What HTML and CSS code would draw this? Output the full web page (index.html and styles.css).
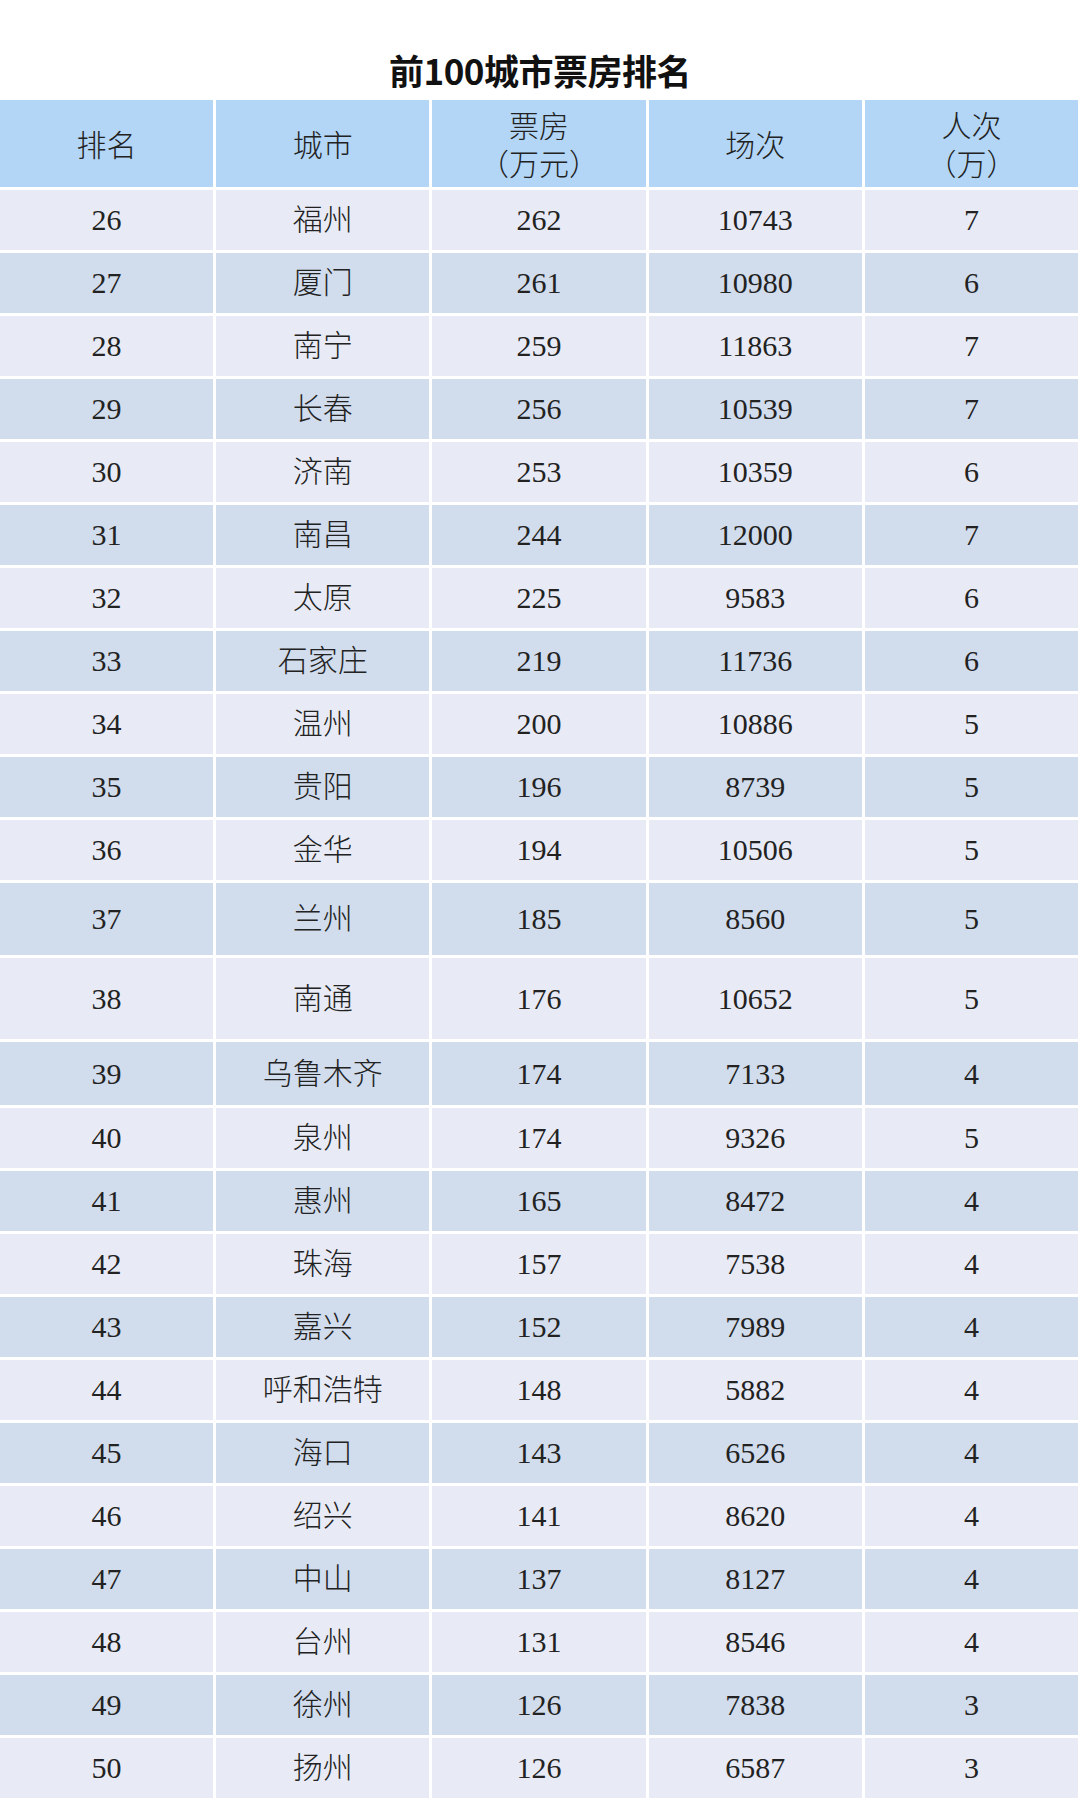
FILE: index.html
```html
<!DOCTYPE html>
<html lang="zh-CN">
<head>
<meta charset="utf-8">
<title>前100城市票房排名</title>
<link rel="stylesheet" href="styles.css">
</head>
<body>
<div class="page">
  <h1 class="title">前100城市票房排名</h1>
  <div class="table">
    <div class="row head">
      <div class="cell">排名</div>
      <div class="cell">城市</div>
      <div class="cell"><span>票房</span><span>（万元）</span></div>
      <div class="cell">场次</div>
      <div class="cell"><span>人次</span><span>（万）</span></div>
    </div>
    <div class="row light"><div class="cell">26</div><div class="cell">福州</div><div class="cell">262</div><div class="cell">10743</div><div class="cell">7</div></div>
    <div class="row dark"><div class="cell">27</div><div class="cell">厦门</div><div class="cell">261</div><div class="cell">10980</div><div class="cell">6</div></div>
    <div class="row light"><div class="cell">28</div><div class="cell">南宁</div><div class="cell">259</div><div class="cell">11863</div><div class="cell">7</div></div>
    <div class="row dark"><div class="cell">29</div><div class="cell">长春</div><div class="cell">256</div><div class="cell">10539</div><div class="cell">7</div></div>
    <div class="row light"><div class="cell">30</div><div class="cell">济南</div><div class="cell">253</div><div class="cell">10359</div><div class="cell">6</div></div>
    <div class="row dark"><div class="cell">31</div><div class="cell">南昌</div><div class="cell">244</div><div class="cell">12000</div><div class="cell">7</div></div>
    <div class="row light"><div class="cell">32</div><div class="cell">太原</div><div class="cell">225</div><div class="cell">9583</div><div class="cell">6</div></div>
    <div class="row dark"><div class="cell">33</div><div class="cell">石家庄</div><div class="cell">219</div><div class="cell">11736</div><div class="cell">6</div></div>
    <div class="row light"><div class="cell">34</div><div class="cell">温州</div><div class="cell">200</div><div class="cell">10886</div><div class="cell">5</div></div>
    <div class="row dark"><div class="cell">35</div><div class="cell">贵阳</div><div class="cell">196</div><div class="cell">8739</div><div class="cell">5</div></div>
    <div class="row light"><div class="cell">36</div><div class="cell">金华</div><div class="cell">194</div><div class="cell">10506</div><div class="cell">5</div></div>
    <div class="row dark tall-a"><div class="cell">37</div><div class="cell">兰州</div><div class="cell">185</div><div class="cell">8560</div><div class="cell">5</div></div>
    <div class="row light tall-b"><div class="cell">38</div><div class="cell">南通</div><div class="cell">176</div><div class="cell">10652</div><div class="cell">5</div></div>
    <div class="row dark tall-c"><div class="cell">39</div><div class="cell">乌鲁木齐</div><div class="cell">174</div><div class="cell">7133</div><div class="cell">4</div></div>
    <div class="row light"><div class="cell">40</div><div class="cell">泉州</div><div class="cell">174</div><div class="cell">9326</div><div class="cell">5</div></div>
    <div class="row dark"><div class="cell">41</div><div class="cell">惠州</div><div class="cell">165</div><div class="cell">8472</div><div class="cell">4</div></div>
    <div class="row light"><div class="cell">42</div><div class="cell">珠海</div><div class="cell">157</div><div class="cell">7538</div><div class="cell">4</div></div>
    <div class="row dark"><div class="cell">43</div><div class="cell">嘉兴</div><div class="cell">152</div><div class="cell">7989</div><div class="cell">4</div></div>
    <div class="row light"><div class="cell">44</div><div class="cell">呼和浩特</div><div class="cell">148</div><div class="cell">5882</div><div class="cell">4</div></div>
    <div class="row dark"><div class="cell">45</div><div class="cell">海口</div><div class="cell">143</div><div class="cell">6526</div><div class="cell">4</div></div>
    <div class="row light"><div class="cell">46</div><div class="cell">绍兴</div><div class="cell">141</div><div class="cell">8620</div><div class="cell">4</div></div>
    <div class="row dark"><div class="cell">47</div><div class="cell">中山</div><div class="cell">137</div><div class="cell">8127</div><div class="cell">4</div></div>
    <div class="row light"><div class="cell">48</div><div class="cell">台州</div><div class="cell">131</div><div class="cell">8546</div><div class="cell">4</div></div>
    <div class="row dark"><div class="cell">49</div><div class="cell">徐州</div><div class="cell">126</div><div class="cell">7838</div><div class="cell">3</div></div>
    <div class="row light"><div class="cell">50</div><div class="cell">扬州</div><div class="cell">126</div><div class="cell">6587</div><div class="cell">3</div></div>
  </div>
</div>
</body>
</html>
```
FILE: styles.css
```css
html, body {
  margin: 0;
  padding: 0;
  background: #ffffff;
}

.page {
  width: 1080px;
  font-family: "Liberation Serif", "Noto Sans CJK SC", serif;
  color: #222222;
}

.title {
  margin: 0;
  height: 100px;
  box-sizing: border-box;
  padding-top: 50px;
  text-align: center;
  font-family: "Noto Sans CJK SC", sans-serif;
  font-weight: 700;
  font-size: 35px;
  line-height: 40px;
  letter-spacing: -0.5px;
  color: #111111;
}

.table {
  width: 1078px;
  display: flex;
  flex-direction: column;
  gap: 3px;
}

.row {
  display: grid;
  grid-template-columns: repeat(5, 1fr);
  gap: 3px;
  height: 60px;
}

.cell {
  display: flex;
  flex-direction: column;
  align-items: center;
  justify-content: center;
  font-size: 30px;
  font-weight: 300;
  line-height: 34px;
}

.head {
  height: 87px;
}

.head .cell {
  background: #b3d6f6;
  padding-top: 4px;
  line-height: 38px;
}

.light .cell {
  background: #e8ebf5;
}

.dark .cell {
  background: #d1dcec;
}

.tall-a {
  height: 72px;
}

.tall-b {
  height: 81px;
}

.tall-c {
  height: 63px;
}
```
